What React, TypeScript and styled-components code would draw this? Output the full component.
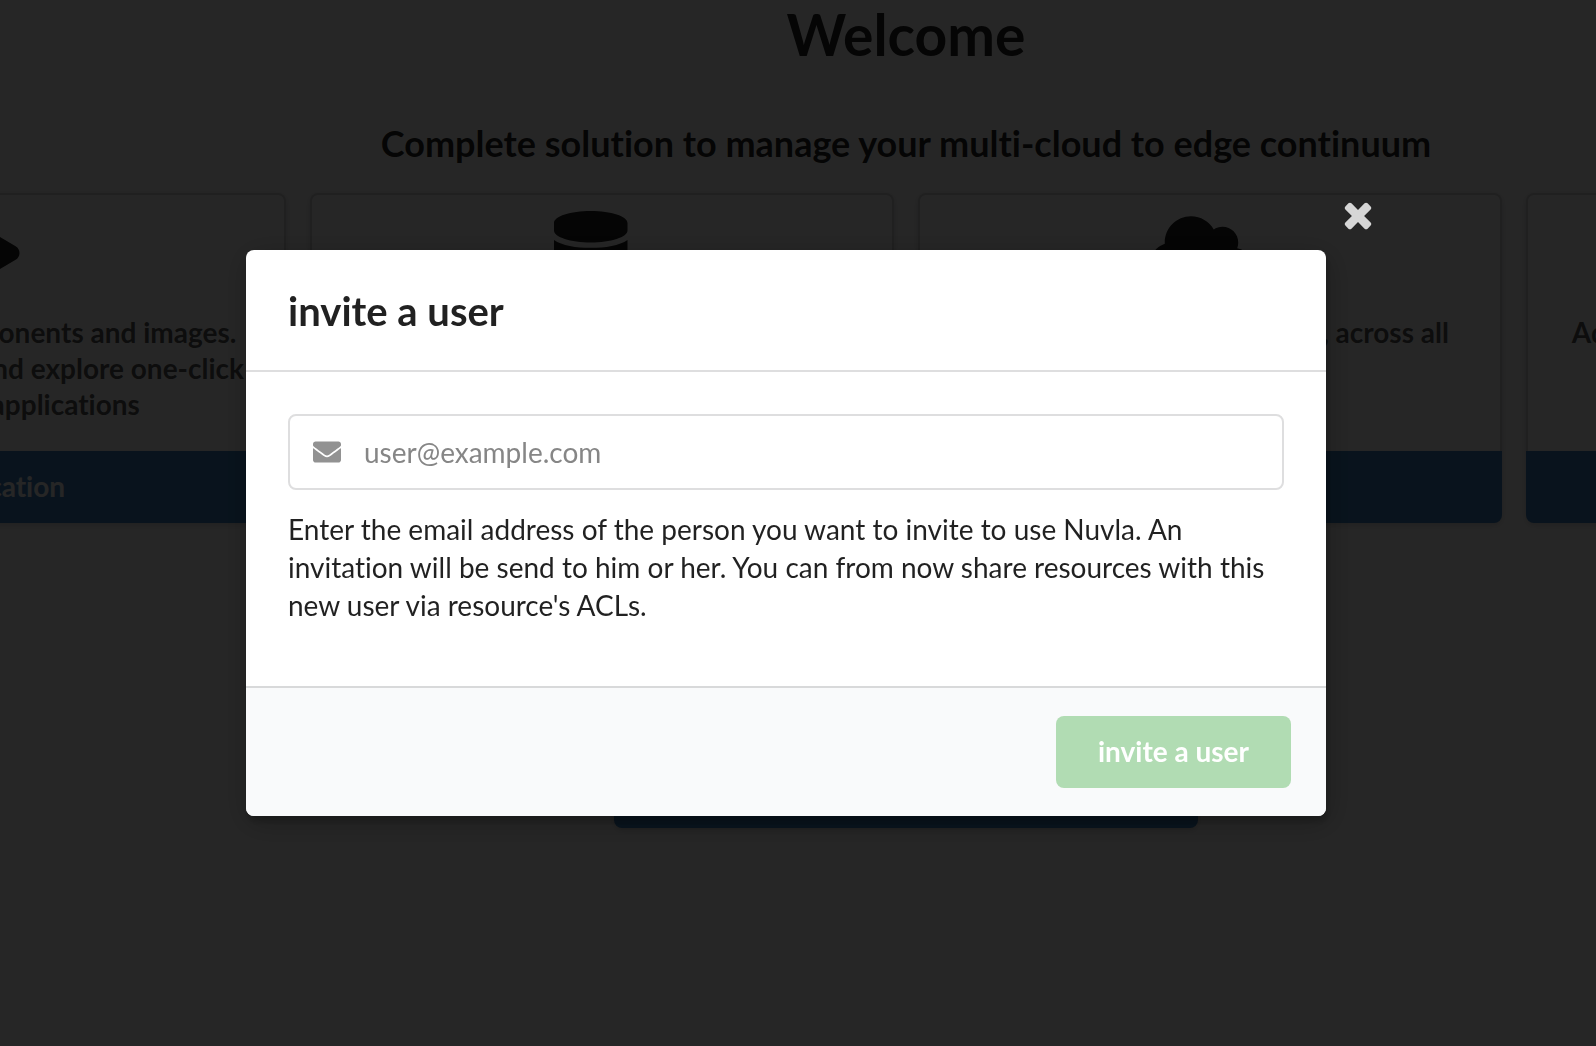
import React, { useState } from "react";
import styled, { createGlobalStyle } from "styled-components";

const GlobalStyle = createGlobalStyle`
  *, *::before, *::after { box-sizing: border-box; }
  body {
    margin: 0;
    background: #fff;
    color: rgba(0, 0, 0, 0.87);
    font: 28px/38px Lato, "Liberation Sans", sans-serif;
    font-variant-ligatures: none;
    overflow: hidden;
  }
  button, input { font: inherit; font-variant-ligatures: none; }
`;

const Page = styled.main`
  display: flex;
  flex-direction: column;
  align-items: center;
  min-height: 100vh;
  padding-left: 216px;
`;

const Title = styled.h1`
  margin: 0;
  font-size: 57px;
  line-height: 68px;
`;

const Subtitle = styled.h2`
  margin: 51px 0 26px;
  font-size: 36px;
  line-height: 48px;
  white-space: nowrap;
`;

const Cards = styled.section`
  display: grid;
  grid-template-columns: repeat(4, 584px);
  gap: 24px;
`;

const Card = styled.article<{ $centred?: boolean }>`
  display: flex;
  flex-direction: column;
  min-height: 281px;
  border-radius: 8px;
  box-shadow: 0 2px 6px 0 #d4d4d5, inset 0 0 0 2px #d4d4d5;
  ${(p) => p.$centred && "grid-column: 1 / -1; justify-self: center; width: 584px;"}
`;

const CardBody = styled.div`
  flex: 1;
  padding: 18px 28px 29px;
  text-align: center;
`;

const IconSlot = styled.div`
  display: flex;
  justify-content: center;
  height: 84px;
  margin: 0 22px 19px 0;

  svg { height: 84px; fill: rgba(0, 0, 0, 0.87); }
`;

const Description = styled.p`
  margin: 0;
  color: rgba(0, 0, 0, 0.68);
  font-weight: 700;
  line-height: 36px;
  white-space: pre-line;
`;

const CardButton = styled.button`
  height: 72px;
  padding: 0 42px 2px;
  border: 0;
  border-radius: 0 0 8px 8px;
  background: #3c80c0;
  color: #fff;
  font-weight: 700;
`;

const Dimmer = styled.div`
  position: fixed;
  inset: 0;
  display: flex;
  align-items: center;
  justify-content: center;
  padding: 20px 24px 0 0;
  background: rgba(0, 0, 0, 0.85);
`;

const Modal = styled.form`
  position: relative;
  width: 1080px;
  max-width: 90vw;
  border-radius: 8px;
  background: #fff;
  box-shadow: 2px 6px 6px 0 rgba(0, 0, 0, 0.2), 2px 6px 30px 4px rgba(0, 0, 0, 0.2);
`;

const CloseButton = styled.button`
  position: absolute;
  top: -54px;
  right: -52px;
  display: grid;
  place-items: center;
  width: 40px;
  height: 40px;
  padding: 0;
  border: 0;
  background: none;

  svg { height: 40px; fill: #d6d6d6; }
`;

const ModalTitle = styled.h2`
  margin: 0;
  padding: 36px 42px 34px;
  border-bottom: 2px solid #dededf;
  font-size: 40px;
  line-height: 50px;
`;

const ModalContent = styled.div`
  padding: 42px;
`;

const Field = styled.label`
  display: flex;
  align-items: center;
  height: 76px;
  padding-left: 23px;
  border: 2px solid #dededf;
  border-radius: 8px;

  svg { width: 28px; height: 28px; fill: #929292; }
`;

const EmailInput = styled.input`
  flex: 1;
  min-width: 0;
  height: 100%;
  padding: 0 23px;
  border: 0;
  outline: 0;
  background: none;
  color: inherit;

  &::placeholder { color: #868686; opacity: 1; }
`;

const Help = styled.p`
  margin: 20px 0;
`;

const ModalActions = styled.footer`
  display: flex;
  justify-content: flex-end;
  padding: 28px 35px;
  border-top: 2px solid #d8d9da;
  border-radius: 0 0 8px 8px;
  background: #f9fafb;
`;

const InviteButton = styled.button`
  height: 72px;
  padding: 0 42px 2px;
  border: 0;
  border-radius: 8px;
  background: #b1dcb3;
  color: #fff;
  font-weight: 700;
`;

const icons = {
  play: {
    viewBox: "0 0 448 512",
    path: "M424.4 214.7L72.4 6.6C43.8-10.3 0 6.1 0 47.9V464c0 37.5 40.7 60.1 72.4 41.3l352-208c31.4-18.5 31.5-64.1 0-82.6z",
  },
  database: {
    viewBox: "0 0 448 512",
    path: "M448 73.1v45.8C448 159.1 347.7 192 224 192S0 159.1 0 118.9V73.1C0 32.9 100.3 0 224 0s224 32.9 224 73.1zM448 176v102.9C448 319.1 347.7 352 224 352S0 319.1 0 278.9V176c48.1 33.1 136.2 48.6 224 48.6S399.9 209.1 448 176zm0 160v102.9C448 479.1 347.7 512 224 512S0 479.1 0 438.9V336c48.1 33.1 136.2 48.6 224 48.6S399.9 369.1 448 336z",
  },
  cloud: {
    viewBox: "0 0 604 512",
    path: "M537.6 226.6c4.1-10.7 6.4-22.4 6.4-34.6 0-53-43-96-96-96-19.7 0-38.1 6-53.3 16.2C367 64.2 315.3 32 256 32c-88.4 0-160 71.6-160 160 0 2.7.1 5.4.2 8.1C40.2 219.8 0 273.2 0 336c0 79.5 64.5 144 144 144h368c70.7 0 128-57.3 128-128 0-61.9-44-113.6-102.4-125.4z",
  },
};

type Feature = {
  icon?: keyof typeof icons;
  description: string;
  action: string;
};

const features: Feature[] = [
  {
    icon: "play",
    description:
      "Manage apps, components and images.\nConfigure, browse and explore one-click\ndeployable applications",
    action: "Application",
  },
  { icon: "database", description: "Manage your data", action: "Data" },
  {
    icon: "cloud",
    description: "Supervise your deployments, across all\nyour clouds",
    action: "Deployment",
  },
  { description: "Add and manage your compute devices,\nat the edge", action: "Edge" },
];

function FeatureCard({ feature, centred }: { feature: Feature; centred?: boolean }) {
  const icon = feature.icon && icons[feature.icon];
  return (
    <Card $centred={centred}>
      <CardBody>
        <IconSlot>
          {icon && (
            <svg viewBox={icon.viewBox} overflow="visible" aria-hidden="true">
              <path d={icon.path} />
            </svg>
          )}
        </IconSlot>
        <Description>{feature.description}</Description>
      </CardBody>
      <CardButton type="button">{feature.action}</CardButton>
    </Card>
  );
}

export default function App() {
  const [email, setEmail] = useState("");

  return (
    <>
      <GlobalStyle />
      <Page>
        <Title>Welcome</Title>
        <Subtitle>Complete solution to manage your multi-cloud to edge continuum</Subtitle>
        <Cards>
          {features.map((feature) => (
            <FeatureCard key={feature.action} feature={feature} />
          ))}
          <FeatureCard centred feature={{ description: "Manage credentials", action: "Credentials" }} />
        </Cards>
      </Page>
      <Dimmer>
        <Modal role="dialog" aria-modal="true" aria-labelledby="invite-title" onSubmit={(e) => e.preventDefault()}>
          <CloseButton type="button" aria-label="Close">
            <svg viewBox="0 64 1792 1792" aria-hidden="true">
              <path d="M1490 1322q0 40-28 68l-136 136q-28 28-68 28t-68-28l-294-294-294 294q-28 28-68 28t-68-28l-136-136q-28-28-28-68t28-68l294-294-294-294q-28-28-28-68t28-68l136-136q28-28 68-28t68 28l294 294 294-294q28-28 68-28t68 28l136 136q28 28 28 68t-28 68l-294 294 294 294q28 28 28 68z" />
            </svg>
          </CloseButton>
          <ModalTitle id="invite-title">invite a user</ModalTitle>
          <ModalContent>
            <Field>
              <svg viewBox="0 0 512 512" aria-hidden="true">
                <path d="M502.3 190.8c3.9-3.1 9.7-.2 9.7 4.7V400c0 26.5-21.5 48-48 48H48c-26.5 0-48-21.5-48-48V195.6c0-5 5.7-7.8 9.7-4.7 22.4 17.4 52.1 39.5 154.1 113.6 21.1 15.4 56.7 47.8 92.2 47.6 35.7.3 72-32.8 92.3-47.6 102-74.1 131.6-96.3 154-113.7zM256 320c23.2.4 56.6-29.2 73.4-41.4 132.7-96.3 142.8-104.7 173.4-128.7 5.8-4.5 9.2-11.5 9.2-18.9v-19c0-26.5-21.5-48-48-48H48c-26.5 0-48 21.5-48 48v19c0 7.4 3.4 14.3 9.2 18.9 30.6 23.9 40.7 32.4 173.4 128.7 16.8 12.2 50.2 41.8 73.4 41.4z" />
              </svg>
              <EmailInput
                type="email"
                aria-label="Email address"
                placeholder="user@example.com"
                value={email}
                onChange={(e) => setEmail(e.target.value)}
              />
            </Field>
            <Help>
              Enter the email address of the person you want to invite to use Nuvla. An invitation will be send to him
              or her. You can from now share resources with this new user via resource's ACLs.
            </Help>
          </ModalContent>
          <ModalActions>
            <InviteButton type="submit" disabled={email === ""}>
              invite a user
            </InviteButton>
          </ModalActions>
        </Modal>
      </Dimmer>
    </>
  );
}
